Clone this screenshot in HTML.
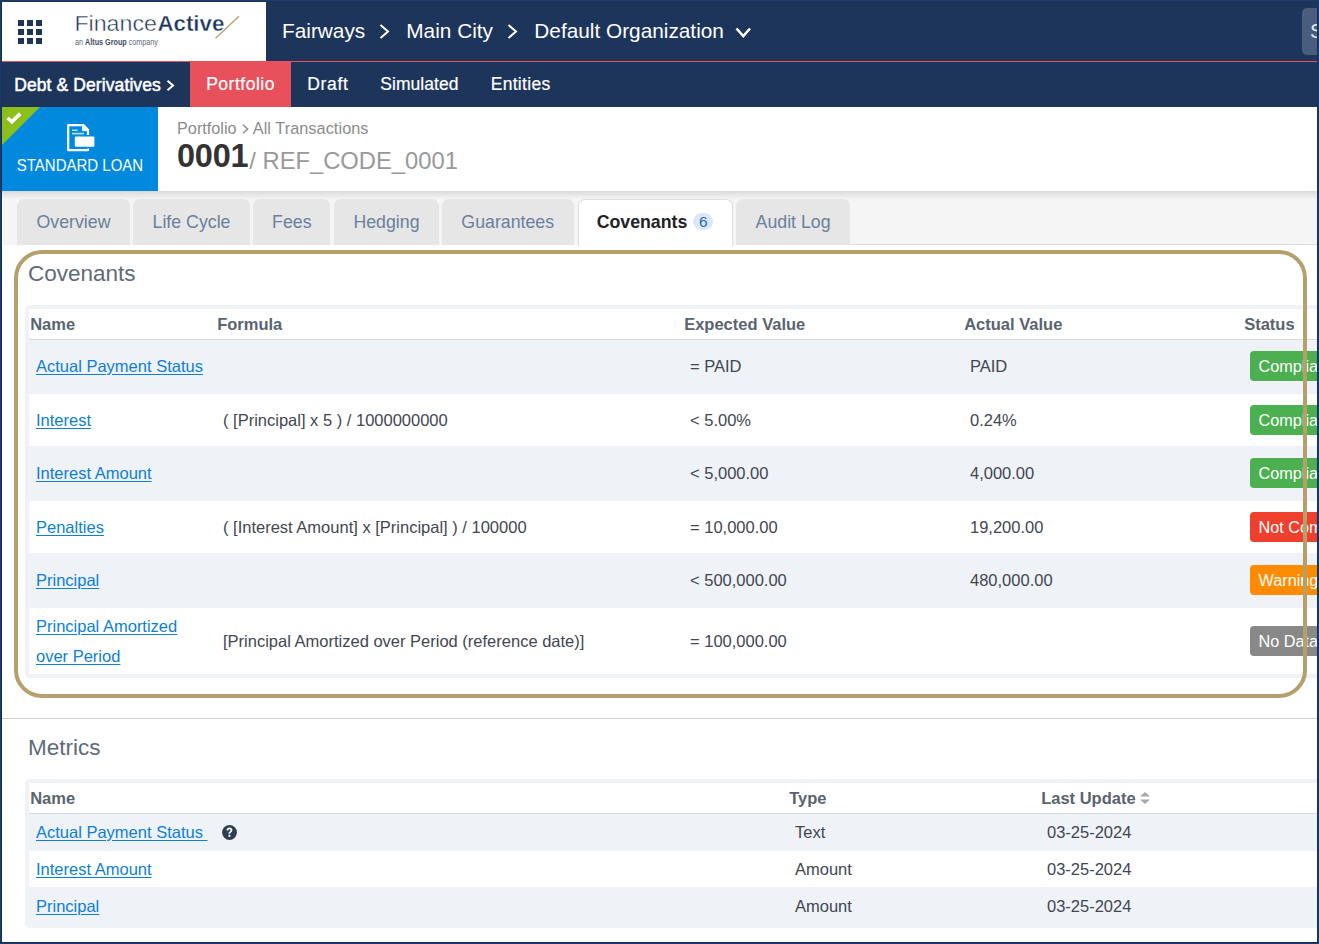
<!DOCTYPE html>
<html>
<head>
<meta charset="utf-8">
<title>Covenants</title>
<style>
*{box-sizing:border-box;margin:0;padding:0}
html,body{width:1319px;height:944px;overflow:hidden;background:#fff;font-family:"Liberation Sans",sans-serif;}
body{position:relative;color:#333}
.abs{position:absolute}
svg{position:absolute;overflow:visible}
#topbar{left:0;top:0;width:1319px;height:61px;background:#1e355b}
#logo{left:2px;top:2px;width:264px;height:59px;background:#fff}
#redline{left:0;top:60.6px;width:1319px;height:1.4px;background:#e8505b}
#crumbs{left:282px;top:2px;height:58px;line-height:57px;color:#fff;font-size:20.8px;white-space:nowrap}
#crumbs span{position:absolute;top:0}
#search{left:1302px;top:8px;width:30px;height:47px;border-radius:5px;background:#4b5d7e;color:#e3e9f0;font-size:21px;line-height:46px;padding-left:8px}
#subnav{left:0;top:62px;width:1319px;height:45px;background:#1e355b;color:#fff}
#subnav span{position:absolute;top:0;height:45px;line-height:44px;font-size:17.5px;white-space:nowrap;-webkit-text-stroke:.2px #fff}
#subnav .act{background:#e8505b;left:190px;width:101px;top:-1px;height:46px;line-height:46px}
#hdr{left:0;top:107px;width:1319px;height:84px;background:#fff}
#shadow{z-index:2;left:0;top:191px;width:1319px;height:8px;background:linear-gradient(#d9d9d9,#e2e2e2 30%,#f4f4f4)}
#tile{left:2px;top:107px;width:156px;height:84px;background:#0089dd;overflow:hidden}
#tile .tri{position:absolute;left:0;top:0;width:0;height:0;border-top:38.5px solid #8cbf1a;border-right:38.5px solid transparent}
#tile .lbl{position:absolute;left:0;width:156px;top:49.3px;transform:scaleY(1.05);transform-origin:center top;text-align:center;color:#fff;font-size:15px;white-space:nowrap}
#bc{left:177px;top:118.5px;font-size:16.25px;color:#8c8c8c;white-space:nowrap}
#ttl{left:177px;top:136px;white-space:nowrap;color:#999;font-size:23.75px;line-height:40px}
#ttl b{color:#333;font-size:32.5px;font-weight:bold;letter-spacing:-.25px}
#tabsbg{left:3px;top:191px;width:1316px;height:54px;background:#f5f5f5}
#tabline{left:850px;top:244px;width:469px;height:1px;background:#dcdcdc}
.tab{position:absolute;top:199px;height:45.6px;background:#e6e6e6;border-radius:7px 7px 0 0;color:#6c7f9c;font-size:17.75px;line-height:47px;text-align:center;white-space:nowrap}
.tab.on{background:#fff;color:#222;font-weight:bold;border:1px solid #ddd;border-bottom:none;height:47px;line-height:45.5px}
.badge{display:inline-block;background:#dbe7f5;color:#2b6cb0;font-weight:normal;font-size:15.5px;border-radius:10px;height:17px;line-height:18px;width:20px;text-align:center;vertical-align:1px;margin-left:6px}
#content{left:0;top:245px;width:1319px;height:699px;background:#fff}
h2{position:absolute;font-weight:normal;font-size:22.5px;color:#5e6b78;white-space:nowrap}
.wrap{position:absolute;background:#eff2f7;border-radius:5px;padding:4px 0 4px 4px}
table{border-collapse:separate;border-spacing:0;table-layout:fixed;font-size:16.5px;color:#414752}
th{background:#fff;text-align:left;font-weight:bold;font-size:16.5px;color:#5a6470;border-bottom:1px solid #d6d9de;padding:0 0 0 1.2px;white-space:nowrap;height:31px}
td{padding:0 0 0 7px;vertical-align:middle;white-space:nowrap}
tr.w td{background:#fff}
tr.g td{padding-bottom:2px}
tr.g3 td{padding-top:1.5px}
a{color:#0d7fd6;text-decoration:underline;text-underline-offset:2px}
.st{display:inline-block;color:#fff;border-radius:4px;height:30px;line-height:30px;padding:0 8.5px;font-size:16.25px}
#sep{left:2px;top:718px;width:1315px;height:1px;background:#d0d0d0}
#gold{left:14px;top:250px;width:1293px;height:448px;border:4px solid #b3a06a;border-radius:28px;pointer-events:none}
#frame{z-index:5;left:0;top:0;width:1319px;height:944px;border:1px solid #1f3a68;pointer-events:none}
#frame2{z-index:5;left:1px;top:1px;width:1317px;height:942px;border:1px solid #14305d;border-top-color:#1e355b;pointer-events:none}
</style>
</head>
<body>
<div id="topbar" class="abs"></div>
<div id="logo" class="abs">
  <svg style="left:16px;top:18px" width="24" height="24" viewBox="0 0 24 24" fill="#1e355b">
    <rect x="0" y="0" width="6" height="6"/><rect x="9" y="0" width="6" height="6"/><rect x="18" y="0" width="6" height="6"/>
    <rect x="0" y="9" width="6" height="6"/><rect x="9" y="9" width="6" height="6"/><rect x="18" y="9" width="6" height="6"/>
    <rect x="0" y="18" width="6" height="6"/><rect x="9" y="18" width="6" height="6"/><rect x="18" y="18" width="6" height="6"/>
  </svg>
  <svg style="left:0;top:0" width="264" height="59" viewBox="0 0 264 59">
    <text x="72.4" y="28.8" font-family="Liberation Sans" font-size="22.8" fill="#1e355b" stroke="#fff" stroke-width=".45" paint-order="fill stroke" textLength="82.5" lengthAdjust="spacingAndGlyphs">Finance</text>
    <text x="155.4" y="28.8" font-family="Liberation Sans" font-size="22.8" font-weight="bold" fill="#1e355b" stroke="#fff" stroke-width=".4" paint-order="fill stroke" textLength="67" lengthAdjust="spacingAndGlyphs">Active</text>
    <line x1="213.5" y1="36.2" x2="237" y2="14.2" stroke="#b3a06a" stroke-width="1.3"/>
    <text x="73" y="42.6" font-family="Liberation Sans" font-size="8.3" fill="#5a6577" textLength="83" lengthAdjust="spacingAndGlyphs">an <tspan font-weight="bold" fill="#3f4b61">Altus Group</tspan> company</text>
  </svg>
</div>
<div id="crumbs" class="abs">
  <span style="left:0">Fairways</span>
  <span style="left:124.3px">Main City</span>
  <span style="left:252.3px">Default Organization</span>
</div>
<svg style="left:379px;top:24px" width="11" height="15" viewBox="0 0 11 15" fill="none" stroke="#fff" stroke-width="2"><polyline points="1.5,1 9,7.5 1.5,14"/></svg>
<svg style="left:507px;top:24px" width="11" height="15" viewBox="0 0 11 15" fill="none" stroke="#fff" stroke-width="2"><polyline points="1.5,1 9,7.5 1.5,14"/></svg>
<svg style="left:735px;top:27px" width="17" height="12" viewBox="0 0 17 12" fill="none" stroke="#fff" stroke-width="2.6"><polyline points="1.5,1.5 8.3,9 15,1.5"/></svg>
<div id="search" class="abs">S</div>
<div id="redline" class="abs"></div>
<div id="subnav" class="abs">
  <span style="left:14.2px;top:1.4px;letter-spacing:.1px;-webkit-text-stroke:.5px #fff">Debt &amp; Derivatives</span>
  <span class="act"><i style="position:absolute;left:16.2px;top:0;font-style:normal;letter-spacing:.5px">Portfolio</i></span>
  <span style="left:307.3px;letter-spacing:.67px">Draft</span>
  <span style="left:380.3px;letter-spacing:.05px">Simulated</span>
  <span style="left:490.7px;letter-spacing:.3px">Entities</span>
</div>
<svg style="left:166px;top:79.5px" width="9" height="11" viewBox="0 0 9 11" fill="none" stroke="#fff" stroke-width="2"><polyline points="1.5,0.8 7,5.5 1.5,10.2"/></svg>
<div id="hdr" class="abs"></div>
<div id="shadow" class="abs"></div>
<div id="tile" class="abs"><div class="tri"></div>
  <svg style="left:4px;top:5px" width="16" height="12" viewBox="0 0 16 12" fill="none" stroke="#fff" stroke-width="3.6"><polyline points="1.6,6 5.8,9.8 14.2,1.6"/></svg>
  <svg style="left:65px;top:16.5px" width="28" height="28" viewBox="0 0 28 28">
    <path d="M1.2,1.2 H16.5 L21,5.7 V26.2 H1.2 Z" fill="none" stroke="#fff" stroke-width="2.2" stroke-linejoin="round"/>
    <path d="M15.6,1.2 V6.6 H21 Z" fill="#fff" stroke="#fff" stroke-width="1"/>
    <rect x="5" y="5.6" width="5.6" height="1.3" fill="#fff" opacity=".85"/>
    <rect x="5" y="8.8" width="12" height="1.6" fill="#fff" opacity=".75"/>
    <rect x="6.3" y="11" width="23" height="13.4" rx="1.5" fill="#0089dd"/>
    <rect x="7.8" y="12.5" width="19.6" height="10.2" rx="1.3" fill="#fff"/>
  </svg>
  <div class="lbl">STANDARD LOAN</div>
</div>
<div id="bc" class="abs">Portfolio<svg style="position:static;display:inline-block;margin:0 3.6px 0 5.5px;vertical-align:-.5px" width="7" height="10" viewBox="0 0 7 10" fill="none" stroke="#8c8c8c" stroke-width="1.5"><polyline points="1,.8 5.6,5 1,9.2"/></svg><span style="letter-spacing:.07px">All Transactions</span></div>
<div id="ttl" class="abs"><b>0001</b><span style="margin-left:1px;position:relative;top:1.7px">/ REF_CODE_0001</span></div>
<div id="tabsbg" class="abs"></div>
<div id="content" class="abs"></div>
<div id="tabline" class="abs"></div>
<div class="tab" style="left:17.3px;width:112.4px">Overview</div>
<div class="tab" style="left:133.2px;width:116.6px">Life Cycle</div>
<div class="tab" style="left:253.3px;width:77px">Fees</div>
<div class="tab" style="left:334.3px;width:104.4px">Hedging</div>
<div class="tab" style="left:442px;width:131.5px">Guarantees</div>
<div class="tab on" style="left:577.5px;width:155px">Covenants<span class="badge">6</span></div>
<div class="tab" style="left:736.3px;width:113.6px">Audit Log</div>

<h2 style="left:28px;top:261px">Covenants</h2>
<div class="wrap" id="w1" style="left:25px;top:305px;width:1301px">
<table id="t1" style="width:1297px">
<colgroup><col style="width:187px"><col style="width:467px"><col style="width:280px"><col style="width:280px"><col></colgroup>
<tr><th>Name</th><th>Formula</th><th>Expected Value</th><th>Actual Value</th><th>Status</th></tr>
<tr class="g" style="height:54px"><td><a>Actual Payment Status</a></td><td></td><td>= PAID</td><td>PAID</td><td><span class="st" style="background:#4caf50">Compliant</span></td></tr>
<tr class="w" style="height:52px"><td><a>Interest</a></td><td>( [Principal] x 5 ) / 1000000000</td><td>&lt; 5.00%</td><td>0.24%</td><td><span class="st" style="background:#4caf50">Compliant</span></td></tr>
<tr style="height:55px"><td><a>Interest Amount</a></td><td></td><td>&lt; 5,000.00</td><td>4,000.00</td><td><span class="st" style="position:relative;top:-1px;background:#4caf50">Compliant</span></td></tr>
<tr class="w" style="height:52px"><td><a>Penalties</a></td><td>( [Interest Amount] x [Principal] ) / 100000</td><td>= 10,000.00</td><td>19,200.00</td><td><span class="st" style="background:#ee402d">Not Compliant</span></td></tr>
<tr style="height:55px"><td><a>Principal</a></td><td></td><td>&lt; 500,000.00</td><td>480,000.00</td><td><span class="st" style="position:relative;top:-1px;background:#ff8c00">Warning</span></td></tr>
<tr class="w" style="height:66px"><td style="line-height:30px"><a>Principal Amortized<br>over Period</a></td><td>[Principal Amortized over Period (reference date)]</td><td>= 100,000.00</td><td></td><td><span class="st" style="background:#888">No Data</span></td></tr>
</table>
</div>

<div id="sep" class="abs"></div>
<h2 style="left:28px;top:735px">Metrics</h2>
<div class="wrap" id="w2" style="left:25px;top:779px;width:1301px">
<table id="t2" style="width:1297px">
<colgroup><col style="width:759px"><col style="width:252px"><col></colgroup>
<tr><th>Name</th><th>Type</th><th>Last Update<svg style="position:static;display:inline-block;margin-left:4px;vertical-align:0px" width="10" height="12" viewBox="0 0 10 12" fill="#a9a9a9"><path d="M0,4.6 L5,0 L10,4.6 Z"/><path d="M0,7.4 L5,12 L10,7.4 Z"/></svg></th></tr>
<tr style="height:37px"><td><a>Actual Payment Status&nbsp;</a><svg style="position:static;display:inline-block;margin-left:14.7px;vertical-align:-2px" width="15" height="15" viewBox="0 0 15 15"><circle cx="7.5" cy="7.5" r="7.4" fill="#2d3e50"/><g transform="translate(7.5 7.3) scale(1.12) translate(-7.5 -7.3)"><path d="M4.9,5.6 C4.9,3.9 6.1,3.1 7.5,3.1 C9,3.1 10.1,4 10.1,5.3 C10.1,6.4 9.5,6.9 8.8,7.4 C8.3,7.8 8.2,8 8.2,8.7 H6.6 C6.6,7.6 6.8,7.2 7.5,6.7 C8.1,6.3 8.4,6 8.4,5.5 C8.4,4.9 8,4.6 7.5,4.6 C6.9,4.6 6.5,5 6.5,5.6 Z" fill="#fff"/><rect x="6.55" y="9.5" width="1.75" height="1.8" fill="#fff"/></g></svg></td><td>Text</td><td>03-25-2024</td></tr>
<tr class="w" style="height:36px"><td><a>Interest Amount</a></td><td>Amount</td><td>03-25-2024</td></tr>
<tr class="g3" style="height:37px"><td><a>Principal</a></td><td>Amount</td><td>03-25-2024</td></tr>
</table>
</div>

<div id="gold" class="abs"></div>
<div id="frame" class="abs"></div>
<div id="frame2" class="abs"></div>
</body>
</html>
